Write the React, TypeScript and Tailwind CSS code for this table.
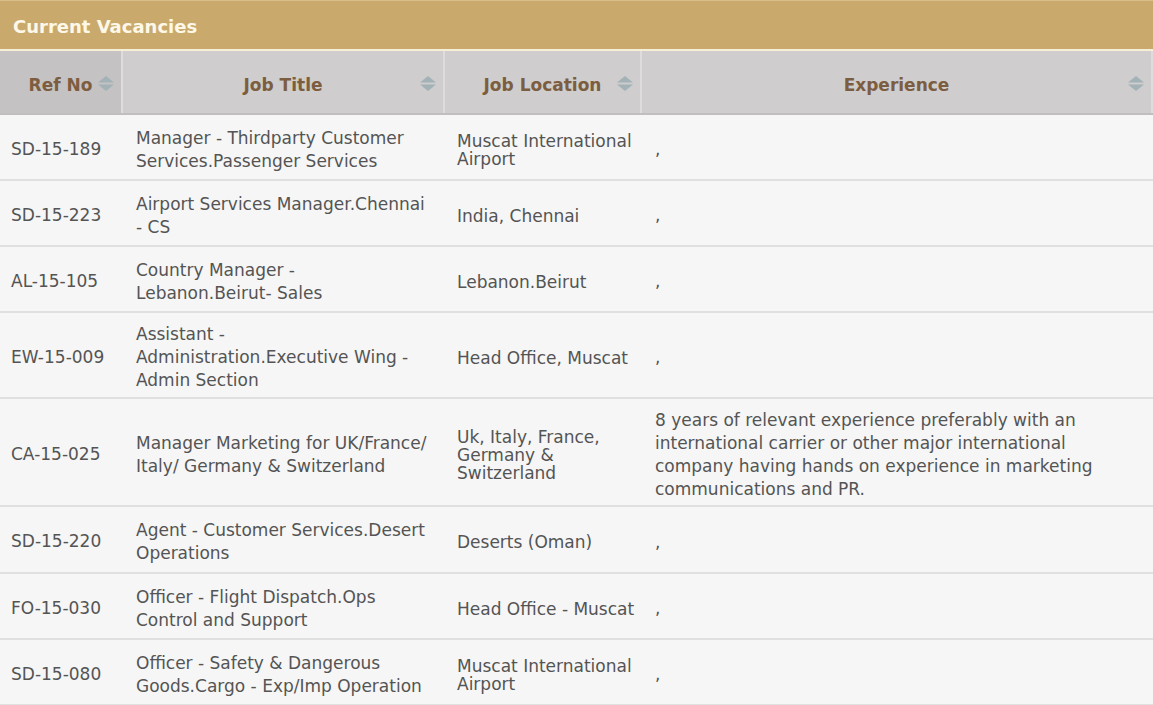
type Job = {
  ref: string;
  title: string[];
  location: string[];
  experience: string[];
  h: string;
};

const jobs: Job[] = [
  { ref: "SD-15-189", title: ["Manager - Thirdparty Customer", "Services.Passenger Services"], location: ["Muscat International", "Airport"], experience: [","], h: "h-[66px]" },
  { ref: "SD-15-223", title: ["Airport Services Manager.Chennai", "- CS"], location: ["India, Chennai"], experience: [","], h: "h-[66px]" },
  { ref: "AL-15-105", title: ["Country Manager -", "Lebanon.Beirut- Sales"], location: ["Lebanon.Beirut"], experience: [","], h: "h-[66px]" },
  { ref: "EW-15-009", title: ["Assistant -", "Administration.Executive Wing -", "Admin Section"], location: ["Head Office, Muscat"], experience: [","], h: "h-[86px]" },
  {
    ref: "CA-15-025",
    title: ["Manager Marketing for UK/France/", "Italy/ Germany & Switzerland"],
    location: ["Uk, Italy, France,", "Germany &", "Switzerland"],
    experience: [
      "8 years of relevant experience preferably with an",
      "international carrier or other major international",
      "company having hands on experience in marketing",
      "communications and PR.",
    ],
    h: "h-[108px]",
  },
  { ref: "SD-15-220", title: ["Agent - Customer Services.Desert", "Operations"], location: ["Deserts (Oman)"], experience: [","], h: "h-[67px]" },
  { ref: "FO-15-030", title: ["Officer - Flight Dispatch.Ops", "Control and Support"], location: ["Head Office - Muscat"], experience: [","], h: "h-[66px]" },
  { ref: "SD-15-080", title: ["Officer - Safety & Dangerous", "Goods.Cargo - Exp/Imp Operation"], location: ["Muscat International", "Airport"], experience: [","], h: "h-[66px]" },
];

function SortIcon() {
  return (
    <svg width="18" height="17" viewBox="0 0 18 17" className="shrink-0">
      <path d="M9 1 L17 7.5 L1 7.5 Z" fill="#a3b2b6" />
      <path d="M1 9.5 L17 9.5 L9 16 Z" fill="#a3b2b6" />
    </svg>
  );
}

function HeadCell({ label, className }: { label: string; className: string }) {
  return (
    <div className={`relative flex items-center justify-center pt-[8px] border-r-2 border-[#dedcdc] ${className}`}>
      <span className="text-[17px] font-bold text-[#7d5d40]">{label}</span>
      <span className="absolute right-[6px] top-[24px]">
        <SortIcon />
      </span>
    </div>
  );
}

function Lines({ lines, leading }: { lines: string[]; leading: string }) {
  return (
    <div className={leading}>
      {lines.map((l, i) => (
        <div key={i} className="whitespace-nowrap">
          {l}
        </div>
      ))}
    </div>
  );
}

export default function App() {
  return (
    <div className="w-[1153px] h-[705px] overflow-hidden bg-[#f6f6f6]" style={{ fontFamily: '"DejaVu Sans", Verdana, sans-serif' }}>
      <div className="h-[49px] bg-[#c9aa6c] border-t border-[#d8bf8a] flex items-center pt-[2px] px-[13px]">
        <h1 className="text-[18px] font-bold text-[#fdf8e8]">Current Vacancies</h1>
      </div>
      <div className="h-[2px] bg-[#f6eed5]" />

      <div className="flex h-[64px] bg-[#cfcdcd] border-b-2 border-[#c0bebe]">
        <HeadCell label="Ref No" className="w-[123px] bg-[#c4c2c2]" />
        <HeadCell label="Job Title" className="w-[322px]" />
        <HeadCell label="Job Location" className="w-[197px]" />
        <HeadCell label="Experience" className="flex-1 border-r-0" />
      </div>

      {jobs.map((j) => (
        <div key={j.ref} className={`flex ${j.h} pt-[5px] border-b-2 border-[#e0e0e0] text-[17px] text-[#545454]`}>
          <div className="w-[123px] flex items-center pl-[11px]">{j.ref}</div>
          <div className="w-[322px] flex items-center pl-[13px]">
            <Lines lines={j.title} leading="leading-[23px]" />
          </div>
          <div className="w-[197px] flex items-center pl-[12px]">
            <Lines lines={j.location} leading="leading-[18px]" />
          </div>
          <div className="flex-1 flex items-center pl-[13px]">
            <Lines lines={j.experience} leading="leading-[23px]" />
          </div>
        </div>
      ))}
    </div>
  );
}
